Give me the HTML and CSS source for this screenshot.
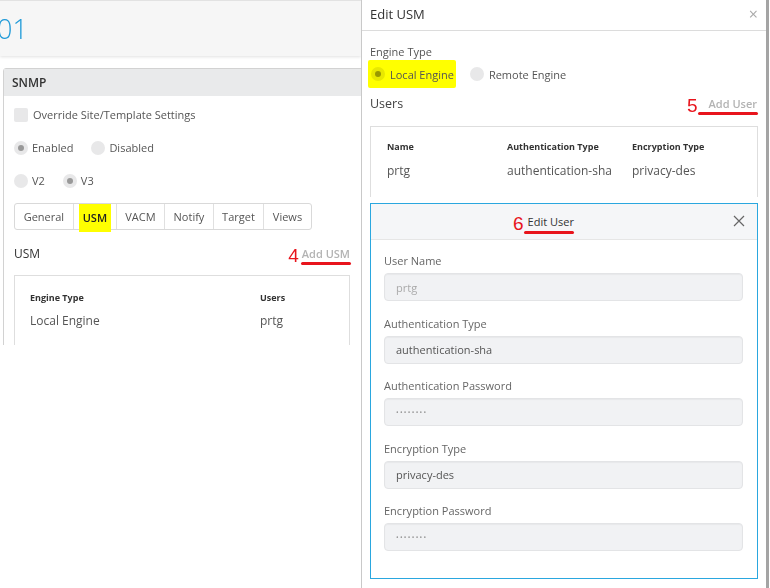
FILE: index.html
```html
<!DOCTYPE html>
<html lang="en">
<head>
    <meta charset="UTF-8">
    <title>SNMP - Edit USM</title>
    <link rel="stylesheet" href="styles.css">
</head>
<body>
    <div class="page">
        <div class="titlebar"><span class="device">01</span></div>

        <div class="content">
            <div class="panel">
                <div class="panel-head">SNMP</div>
                <div class="panel-body">
                    <div class="row">
                        <span class="checkbox"></span>
                        <span class="opt">Override Site/Template Settings</span>
                    </div>
                    <div class="row">
                        <span class="radio checked"></span><span class="opt">Enabled</span>
                        <span class="radio"></span><span class="opt">Disabled</span>
                    </div>
                    <div class="row">
                        <span class="radio"></span><span class="opt">V2</span>
                        <span class="radio checked"></span><span class="opt">V3</span>
                    </div>

                    <div class="tabs">
                        <div class="tab tab-general">General</div>
                        <div class="tab tab-usm"><span class="hl">USM</span></div>
                        <div class="tab tab-vacm">VACM</div>
                        <div class="tab tab-notify">Notify</div>
                        <div class="tab tab-target">Target</div>
                        <div class="tab tab-views">Views</div>
                    </div>

                    <div class="section-head">
                        <span class="section-title">USM</span>
                        <span class="action"><span class="step">4</span><span class="link underline">Add USM</span></span>
                    </div>

                    <div class="box usm-box">
                        <div class="grid usm-grid">
                            <div class="th">Engine Type</div>
                            <div class="th">Users</div>
                            <div class="td">Local Engine</div>
                            <div class="td">prtg</div>
                        </div>
                    </div>
                </div>
            </div>
        </div>
    </div>

    <div class="modal">
        <div class="modal-head">
            <span class="modal-title">Edit USM</span>
            <span class="close">&times;</span>
        </div>
        <div class="modal-body">
            <div class="label">Engine Type</div>
            <div class="engine-row">
                <span class="marker"><span class="radio checked"></span><span class="opt">Local Engine</span></span>
                <span class="radio"></span><span class="opt">Remote Engine</span>
            </div>

            <div class="section-head users-head">
                <span class="section-title">Users</span>
                <span class="action"><span class="step">5</span><span class="link underline wide">Add User</span></span>
            </div>

            <div class="box users-box">
                <div class="grid users-grid">
                    <div class="th">Name</div>
                    <div class="th">Authentication Type</div>
                    <div class="th">Encryption Type</div>
                    <div class="td">prtg</div>
                    <div class="td">authentication-sha</div>
                    <div class="td">privacy-des</div>
                </div>
            </div>

            <div class="edit-user">
                <div class="edit-head">
                    <span class="edit-title"><span class="step">6</span><span class="underline">Edit User</span></span>
                    <svg class="edit-close" width="12" height="12" viewBox="0 0 12 12">
                        <path d="M1 1L11 11M11 1L1 11" stroke="#666" stroke-width="1.2" fill="none"/>
                    </svg>
                </div>
                <div class="edit-body">
                    <div class="field">
                        <div class="field-label">User Name</div>
                        <div class="input muted">prtg</div>
                    </div>
                    <div class="field">
                        <div class="field-label">Authentication Type</div>
                        <div class="input">authentication-sha</div>
                    </div>
                    <div class="field">
                        <div class="field-label">Authentication Password</div>
                        <div class="input dots">&bull;&bull;&bull;&bull;&bull;&bull;&bull;&bull;</div>
                    </div>
                    <div class="field">
                        <div class="field-label">Encryption Type</div>
                        <div class="input">privacy-des</div>
                    </div>
                    <div class="field">
                        <div class="field-label">Encryption Password</div>
                        <div class="input dots">&bull;&bull;&bull;&bull;&bull;&bull;&bull;&bull;</div>
                    </div>
                </div>
            </div>
        </div>
    </div>

    <div class="scrollbar"></div>
</body>
</html>
```

FILE: styles.css
```css
body {
    margin: 0;
    font-family: "Open Sans", Arial, sans-serif;
    font-size: 11px;
    color: #555;
    background: #fff;
    display: flex;
    width: 770px;
    height: 588px;
    overflow: hidden;
}

/* left page */

.page {
    width: 361px;
    flex: none;
    overflow: hidden;
}

.titlebar {
    height: 56px;
    background: #f6f6f6;
    border-top: 1px solid #e2e2e2;
    box-sizing: border-box;
    box-shadow: 0 1px 3px rgba(0, 0, 0, 0.12);
    display: flex;
    align-items: center;
}

.device {
    margin-left: -3px;
    font-size: 27px;
    font-weight: 300;
    color: #1f9ad8;
    line-height: 1;
}

.content {
    height: 289px;
    padding: 12px 0 0 3px;
    box-sizing: border-box;
    overflow: hidden;
}

.panel {
    width: 370px;
    border: 1px solid #d2d2d2;
    border-radius: 3px 3px 0 0;
    height: 320px;
}

.panel-head {
    height: 27px;
    line-height: 27px;
    background: #e9eaeb;
    padding-left: 8px;
    font-size: 12px;
    font-weight: 600;
    color: #333;
}

.panel-body {
    padding: 2px 0 0 10px;
    width: 336px;
}

.row {
    height: 33px;
    display: flex;
    align-items: center;
}

.checkbox {
    width: 14px;
    height: 14px;
    border-radius: 2px;
    background: #e8e8e9;
    margin-right: 5px;
}

.radio {
    width: 14px;
    height: 14px;
    border-radius: 50%;
    background: #e8e8e9;
    display: inline-flex;
    align-items: center;
    justify-content: center;
    margin-right: 4px;
    flex: none;
}

.radio.checked::after {
    content: "";
    width: 6px;
    height: 6px;
    border-radius: 50%;
    background: #999;
}

.opt {
    margin-right: 18px;
    color: #555;
}

.tabs {
    display: flex;
    margin-top: 6px;
    height: 27px;
    width: 298px;
    border: 1px solid #d9d9d9;
    border-radius: 3px;
    box-sizing: border-box;
}

.tab {
    display: flex;
    align-items: center;
    justify-content: center;
    border-right: 1px solid #e0e0e0;
    color: #555;
}

.tab:last-child {
    border-right: none;
}

.tab-general { width: 59px; }
.tab-usm { width: 43px; }
.tab-vacm { width: 48px; }
.tab-notify { width: 49px; }
.tab-target { width: 50px; }
.tab-views { width: 48px; }

.hl {
    background: #ffff00;
    color: #222;
    font-weight: 600;
    padding: 6px 4px 7px;
    margin-top: 3px;
}

.section-head {
    display: flex;
    justify-content: space-between;
    align-items: center;
    margin-top: 14px;
    height: 18px;
}

.section-title {
    font-size: 12px;
    color: #333;
}

.action {
    display: flex;
    align-items: center;
}

.step {
    font-family: "Liberation Sans", Arial, sans-serif;
    font-size: 19px;
    color: #e8141c;
    line-height: 1;
    margin-top: 4px;
}

.link {
    font-weight: 600;
    color: #b3b3b3;
    margin-left: 3px;
}

.underline {
    position: relative;
}

.underline::after {
    content: "";
    position: absolute;
    left: -1px;
    right: -1px;
    bottom: -4px;
    height: 3px;
    border-radius: 2px;
    background: #e8141c;
}

.box {
    border: 1px solid #dedede;
    box-sizing: border-box;
}

.usm-box {
    margin-top: 13px;
    height: 90px;
    padding: 13px 0 0 15px;
}

.grid {
    display: grid;
    align-items: center;
}

.usm-grid {
    grid-template-columns: 230px 1fr;
    grid-template-rows: 16px 31px;
}

.th {
    font-size: 9px;
    font-weight: 700;
    color: #333;
}

.td {
    font-size: 12px;
    color: #555;
}

/* right modal */

.modal {
    width: 405px;
    flex: none;
    border-left: 1px solid #c9c9c9;
    box-sizing: border-box;
    background: #fff;
}

.modal-head {
    height: 31px;
    border-bottom: 1px solid #dcdcdc;
    box-sizing: border-box;
    display: flex;
    justify-content: space-between;
    align-items: center;
    padding: 0 8px 2px 8px;
}

.modal-title {
    font-size: 13px;
    color: #333;
}

.close {
    font-size: 16px;
    color: #aaa;
    line-height: 1;
}

.modal-body {
    padding: 13px 8px 0 8px;
}

.label {
    font-size: 11px;
    line-height: 16px;
    color: #555;
}

.engine-row {
    display: flex;
    align-items: center;
    height: 28px;
    margin-top: 0;
}

.marker {
    display: flex;
    align-items: center;
    background: #ffff00;
    height: 28px;
    padding: 0 0 0 3px;
    margin-left: -2px;
    margin-right: 14px;
    border-radius: 2px;
}

.marker .radio {
    mix-blend-mode: multiply;
}

.marker .opt {
    margin-right: 0;
    padding-right: 2px;
}

.engine-row .radio {
    margin-right: 5px;
}

.users-head {
    margin-top: 6px;
    padding-right: 1px;
    width: 388px;
    box-sizing: border-box;
}

.users-head .section-title {
    font-size: 12.5px;
    color: #444;
}

.link.wide {
    margin-left: 11px;
}

.link.wide::after {
    left: -11px;
}

.users-box {
    margin-top: 14px;
    width: 388px;
    height: 71px;
    border-bottom: none;
    padding: 11px 0 0 16px;
}

.users-grid {
    grid-template-columns: 120px 125px 1fr;
    grid-template-rows: 16px 32px;
}

.edit-user {
    margin-top: 6px;
    width: 388px;
    height: 376px;
    border: 1px solid #2aa7df;
    box-sizing: border-box;
}

.edit-head {
    height: 36px;
    background: #f5f6f8;
    border-bottom: 1px solid #e6e6e6;
    box-sizing: border-box;
    display: flex;
    align-items: center;
    justify-content: center;
    position: relative;
}

.edit-title {
    display: flex;
    align-items: center;
    color: #333;
    margin-right: 41px;
}

.edit-title .step {
    margin-right: 4px;
}

.edit-title .underline::after {
    bottom: -5px;
    left: -4px;
    right: 0;
}

.edit-close {
    position: absolute;
    right: 12px;
    top: 11px;
}

.edit-body {
    padding: 13px 14px 0 13px;
}

.field {
    margin-bottom: 14.5px;
}

.field-label {
    font-size: 11px;
    line-height: 16px;
    color: #666;
    margin-bottom: 4px;
}

.input {
    height: 28px;
    box-sizing: border-box;
    background: #f1f2f4;
    border: 1px solid #e3e4e6;
    border-radius: 4px;
    box-shadow: inset 0 1px 1px rgba(0, 0, 0, 0.04);
    padding-left: 11px;
    display: flex;
    align-items: center;
    font-size: 11px;
    color: #555;
}

.input.muted {
    color: #aaa;
}

.input.dots {
    font-size: 7px;
    letter-spacing: 1.3px;
    color: #999;
}

.scrollbar {
    width: 3px;
    flex: none;
    background: #a4a4a4;
}
```
